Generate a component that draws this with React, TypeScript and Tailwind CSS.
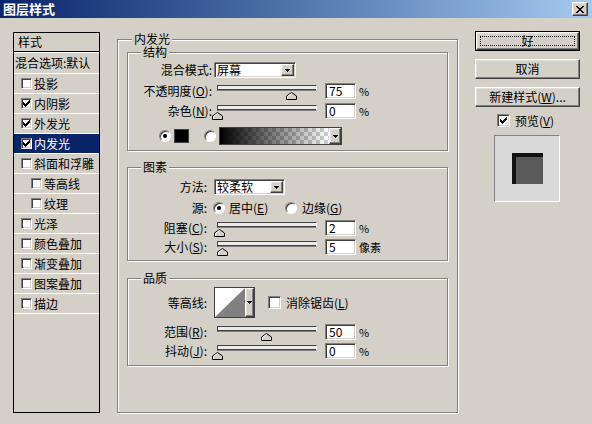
import React from "react";

// classic Windows 3D edges
const sunken =
  "border border-t-[#808080] border-l-[#808080] border-r-white border-b-white shadow-[inset_1px_1px_0_#404040,inset_-1px_-1px_0_#d4d0c8]";
const raised =
  "border border-t-white border-l-white border-r-[#404040] border-b-[#404040] shadow-[inset_-1px_-1px_0_#808080,inset_1px_1px_0_#dfdfdf]";
const etched = "border border-[#808080] shadow-[inset_1px_1px_0_#fff,1px_1px_0_#fff]";

const CHECK = ["......X", ".....XX", "X...XXX", "XX.XXX.", "XXXXX..", ".XXX...", "..X...."];
const CLOSE = ["XX....XX", ".XX..XX.", "..XXXX..", "...XX...", "..XXXX..", ".XX..XX.", "XX....XX"];
const ARROW = ["XXXXX", ".XXX.", "..X.."];

function Pixels({ rows, color = "#000" }: { rows: string[]; color?: string }) {
  const w = rows[0].length;
  return (
    <svg width={w} height={rows.length} viewBox={`0 0 ${w} ${rows.length}`} shapeRendering="crispEdges" className="block">
      {rows.flatMap((r, y) =>
        [...r].map((c, x) => (c === "X" ? <rect key={`${x}-${y}`} x={x} y={y} width={1} height={1} fill={color} /> : null))
      )}
    </svg>
  );
}

function CheckBox({ checked = false, small = false }: { checked?: boolean; small?: boolean }) {
  return (
    <div className={`${small ? "w-[11px] h-[11px]" : "w-[13px] h-[13px]"} shrink-0 bg-white ${sunken} flex items-center justify-center`}>
      {checked && <Pixels rows={CHECK} />}
    </div>
  );
}

function Radio({ checked = false }: { checked?: boolean }) {
  return (
    <div className="w-[12px] h-[12px] shrink-0 rounded-full bg-white border border-t-[#808080] border-l-[#808080] border-r-white border-b-white shadow-[inset_1px_1px_0_#404040] flex items-center justify-center">
      {checked && <div className="w-[4px] h-[4px] rounded-full bg-black" />}
    </div>
  );
}

function M({ c }: { c: string }) {
  return (
    <>
      (<span className="underline">{c}</span>)
    </>
  );
}

function ArrowButton({ className = "" }: { className?: string }) {
  return (
    <div className={`bg-[#d4d0c8] ${raised} flex items-center justify-center ${className}`}>
      <Pixels rows={ARROW} />
    </div>
  );
}

function Select({ value, width }: { value: string; width: string }) {
  return (
    <div className={`${width} h-[16px] bg-white ${sunken} flex items-center justify-between`}>
      <span className="pl-[2px] leading-[12px]">{value}</span>
      <ArrowButton className="w-[13px] h-[12px] mr-px" />
    </div>
  );
}

function Slider({ pos }: { pos: number }) {
  return (
    <div className="relative w-[100px] h-[16px] shrink-0">
      <div className="mt-[4px] h-[6px] border border-t-[#404040] border-l-[#404040] border-r-white border-b-[#808080] bg-[#ececec] shadow-[inset_0_-1px_0_#404040]" />
      <svg className="absolute top-[7px]" style={{ left: pos - 5 }} width="11" height="8" viewBox="0 0 11 8">
        <polygon points="0.5,7.5 0.5,4 5.5,0.5 10.5,4 10.5,7.5" fill="#d4d0c8" stroke="#000" />
        <polyline points="1.5,7 1.5,4.5 5.5,1.5" fill="none" stroke="#fff" />
      </svg>
    </div>
  );
}

function NumField({ value }: { value: string }) {
  return (
    <div className={`w-[31px] h-[16px] shrink-0 bg-white ${sunken} flex items-center pl-[3px] leading-[12px]`}>{value}</div>
  );
}

function SliderRow({
  label,
  labelW,
  sliderMl,
  pos,
  value,
  unit,
  className = "",
}: {
  label: React.ReactNode;
  labelW: string;
  sliderMl: string;
  pos: number;
  value: string;
  unit: string;
  className?: string;
}) {
  return (
    <div className={`flex items-center h-[16px] ${className}`}>
      <div className={`${labelW} shrink-0 text-right`}>{label}</div>
      <div className={sliderMl}>
        <Slider pos={pos} />
      </div>
      <div className="ml-[8px]">
        <NumField value={value} />
      </div>
      <span className="ml-[3px] text-[11px]">{unit}</span>
    </div>
  );
}

const styleItems = [
  { label: "投影", checked: false },
  { label: "内阴影", checked: true },
  { label: "外发光", checked: true },
  { label: "内发光", checked: true, selected: true },
  { label: "斜面和浮雕", checked: false },
  { label: "等高线", checked: false, indent: true },
  { label: "纹理", checked: false, indent: true },
  { label: "光泽", checked: false },
  { label: "颜色叠加", checked: false },
  { label: "渐变叠加", checked: false },
  { label: "图案叠加", checked: false },
  { label: "描边", checked: false },
];

function Legend({ children, ml }: { children: React.ReactNode; ml: string }) {
  return <legend className={`${ml} px-[2px] leading-[12px] bg-[#d4d0c8]`}>{children}</legend>;
}

export default function App() {
  return (
    <div className="w-[592px] h-[424px] overflow-hidden bg-[#d4d0c8] flex flex-col text-[12px] text-black font-['Noto_Sans_CJK_SC',sans-serif]">
      {/* Title bar */}
      <div className="h-[18px] shrink-0 bg-linear-to-r from-[#0a246a] to-[#a6caf0] flex items-center justify-between pl-[3px] pr-[4px]">
        <span className="text-white font-bold text-[13px] leading-[14px]">图层样式</span>
        <div className={`w-[16px] h-[14px] bg-[#d4d0c8] ${raised} flex items-center justify-center`}>
          <Pixels rows={CLOSE} />
        </div>
      </div>

      <div className="flex flex-1">
        {/* Style list */}
        <div className="ml-[13px] mt-[14px] w-[87px] h-[381px] border border-black shrink-0">
          <div className="h-[19px] flex items-center pl-[4px] border-b border-black">样式</div>
          <div className="h-px bg-white" />
          <div className="h-[21px] flex items-center pl-[1px] border-b border-white whitespace-nowrap">混合选项:默认</div>
          {styleItems.map((s) => (
            <div
              key={s.label}
              className={`h-[20px] flex items-center border-b border-white ${s.indent ? "pl-[17px]" : "pl-[7px]"} ${
                s.selected ? "bg-[#0a246a] text-white" : ""
              }`}
            >
              <CheckBox small checked={s.checked} />
              <span className="ml-[2px] leading-[12px]">{s.label}</span>
            </div>
          ))}
        </div>

        {/* Inner glow settings */}
        <fieldset className={`ml-[17px] mt-[15px] w-[341px] h-[380px] px-[9px] shrink-0 ${etched}`}>
          <Legend ml="ml-[5px]">内发光</Legend>

          <fieldset className={`mt-px w-[321px] pt-[4px] pb-[5px] ${etched}`}>
            <Legend ml="ml-[13px]">结构</Legend>
            <div className="flex items-center h-[16px]">
              <div className="w-[84px] shrink-0 text-right">混合模式:</div>
              <div className="ml-[2px]">
                <Select value="屏幕" width="w-[82px]" />
              </div>
            </div>
            <SliderRow
              className="mt-[5px]"
              label={<>不透明度<M c="O" />:</>}
              labelW="w-[84px]"
              sliderMl="ml-[5px]"
              pos={74}
              value="75"
              unit="%"
            />
            <SliderRow
              className="mt-[4px]"
              label={<>杂色<M c="N" />:</>}
              labelW="w-[84px]"
              sliderMl="ml-[5px]"
              pos={0}
              value="0"
              unit="%"
            />
            <div className="mt-[8px] h-[18px] flex items-center pl-[31px]">
              <Radio checked />
              <div className="ml-[3px] w-[15px] h-[14px] bg-black border border-[#404040]" />
              <div className="ml-[15px]">
                <Radio />
              </div>
              <div className="ml-[3px] w-[123px] h-[18px] border border-[#404040] flex bg-white">
                <div className="flex-1 bg-[linear-gradient(to_right,#000,rgba(0,0,0,0)),repeating-conic-gradient(#cfcfcf_0_25%,#fff_0_50%)] bg-[length:100%_100%,8px_8px]" />
                <ArrowButton className="w-[12px] h-full" />
              </div>
            </div>
          </fieldset>

          <fieldset className={`mt-[10px] w-[321px] pt-[6px] pb-[5px] ${etched}`}>
            <Legend ml="ml-[13px]">图素</Legend>
            <div className="flex items-center h-[16px]">
              <div className="w-[79px] shrink-0 text-right">方法:</div>
              <div className="ml-[7px]">
                <Select value="较柔软" width="w-[71px]" />
              </div>
            </div>
            <div className="mt-[6px] h-[14px] flex items-center">
              <div className="w-[79px] shrink-0 text-right">源:</div>
              <div className="ml-[6px]">
                <Radio checked />
              </div>
              <span className="ml-[4px] w-[56px] shrink-0">
                居中<M c="E" />
              </span>
              <Radio />
              <span className="ml-[5px]">
                边缘<M c="G" />
              </span>
            </div>
            <SliderRow
              className="mt-[5px]"
              label={<>阻塞<M c="C" />:</>}
              labelW="w-[79px]"
              sliderMl="ml-[10px]"
              pos={2}
              value="2"
              unit="%"
            />
            <SliderRow
              className="mt-[3px]"
              label={<>大小<M c="S" />:</>}
              labelW="w-[79px]"
              sliderMl="ml-[10px]"
              pos={5}
              value="5"
              unit="像素"
            />
          </fieldset>

          <fieldset className={`mt-[11px] w-[321px] pt-[3px] pb-[6px] ${etched}`}>
            <Legend ml="ml-[13px]">品质</Legend>
            <div className="flex items-center h-[31px]">
              <div className="w-[79px] shrink-0 text-right">等高线:</div>
              <div className="ml-[7px] w-[41px] h-[31px] border border-[#404040] flex">
                <svg width="30" height="29" viewBox="0 0 30 29" className="block">
                  <rect width="30" height="29" fill="#fff" />
                  <polygon points="0,29 30,0 30,29" fill="#808080" />
                </svg>
                <ArrowButton className="flex-1 h-full" />
              </div>
              <div className="ml-[13px]">
                <CheckBox />
              </div>
              <span className="ml-[5px]">
                消除锯齿<M c="L" />
              </span>
            </div>
            <SliderRow
              className="mt-[6px]"
              label={<>范围<M c="R" />:</>}
              labelW="w-[79px]"
              sliderMl="ml-[10px]"
              pos={49}
              value="50"
              unit="%"
            />
            <SliderRow
              className="mt-[3px]"
              label={<>抖动<M c="J" />:</>}
              labelW="w-[79px]"
              sliderMl="ml-[10px]"
              pos={0}
              value="0"
              unit="%"
            />
          </fieldset>
        </fieldset>

        {/* Buttons and preview */}
        <div className="ml-[17px] mt-[13px] w-[105px] shrink-0 flex flex-col">
          <div className="h-[20px] border border-black">
            <div className={`h-full ${raised} p-[3px]`}>
              <div className="h-full border border-dotted border-black flex items-center justify-center leading-[12px]">好</div>
            </div>
          </div>
          <div className={`mt-[8px] h-[20px] ${raised} flex items-center justify-center`}>取消</div>
          <div className={`mt-[8px] h-[20px] ${raised} flex items-center justify-center`}>
            新建样式<M c="W" />...
          </div>
          <div className="mt-[7px] h-[13px] flex items-center pl-[22px]">
            <CheckBox checked />
            <span className="ml-[5px]">
              预览<M c="V" />
            </span>
          </div>
          <div className="mt-[8px] ml-[19px] w-[66px] h-[67px] bg-[#d9d9d9] border border-t-[#808080] border-l-[#808080] border-r-white border-b-white flex items-center justify-center">
            <div className="w-[31px] h-[31px] bg-[#5a5a5a] shadow-[inset_4px_4px_0_#111]" />
          </div>
        </div>
      </div>
    </div>
  );
}
